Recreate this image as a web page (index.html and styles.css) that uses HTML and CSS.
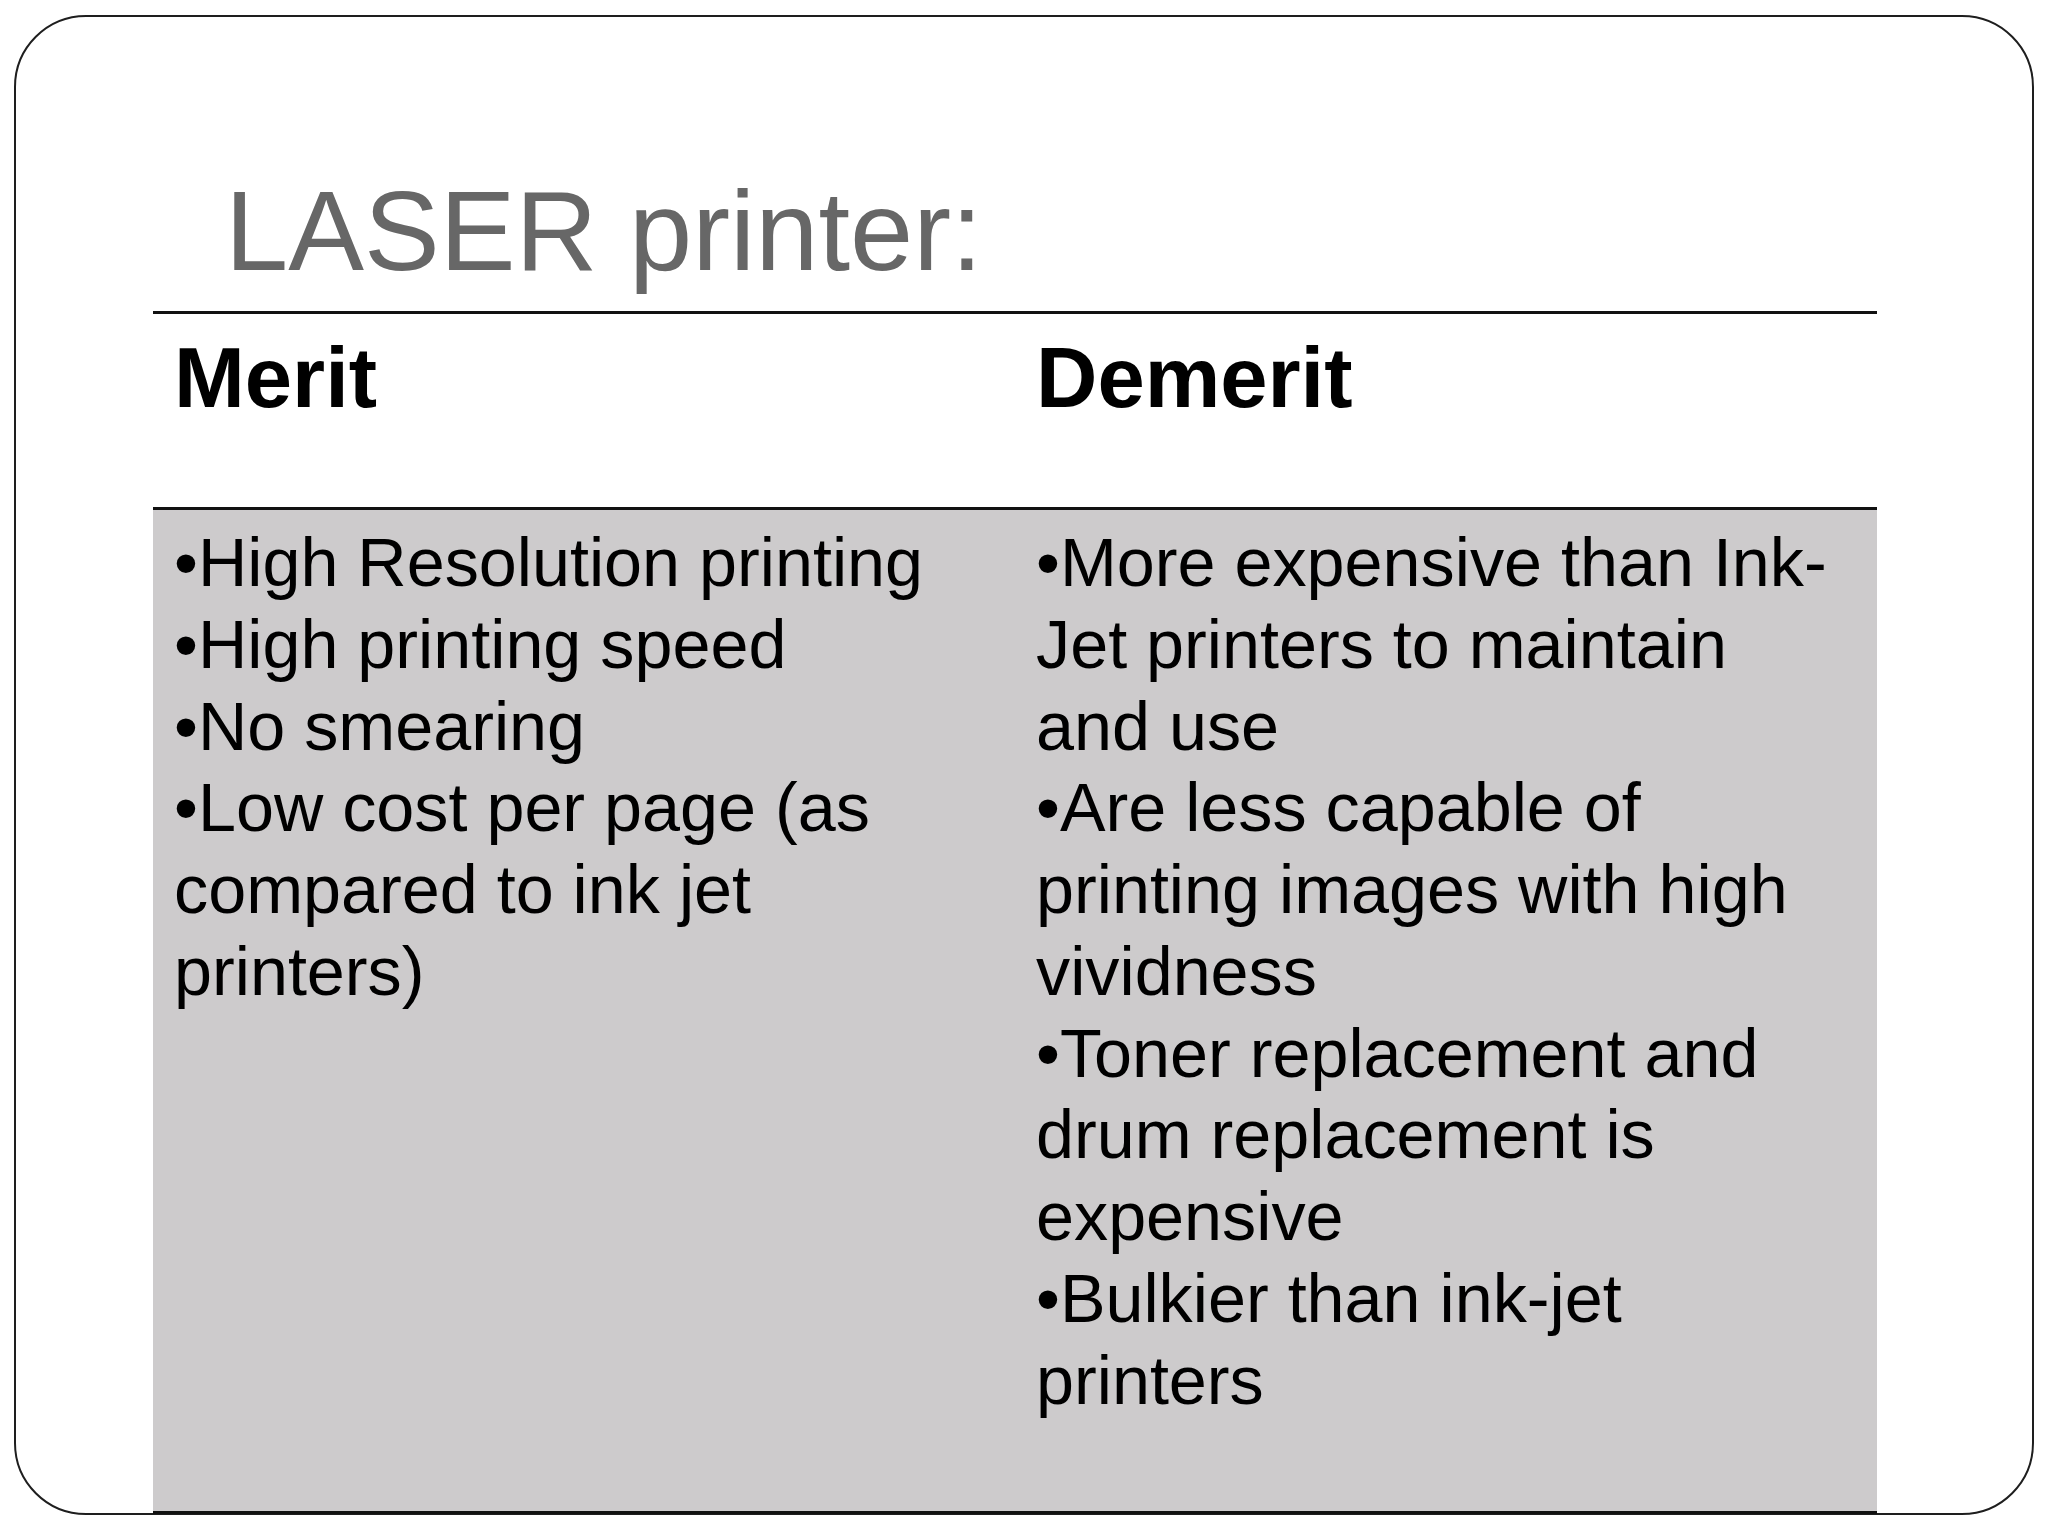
FILE: index.html
```html
<!DOCTYPE html>
<html lang="en">
<head>
<meta charset="utf-8">
<title>LASER printer</title>
<link rel="stylesheet" href="styles.css">
</head>
<body>
<div class="frame">
  <h1 class="title">LASER printer:</h1>
  <div class="table">
    <div class="head-row">
      <div class="cell head">Merit</div>
      <div class="cell head">Demerit</div>
    </div>
    <div class="body-row">
      <div class="cell body">
        <p class="item">•High Resolution printing</p>
        <p class="item">•High printing speed</p>
        <p class="item">•No smearing</p>
        <p class="item">•Low cost per page (as compared to ink jet printers)</p>
      </div>
      <div class="cell body">
        <p class="item">•More expensive than Ink-Jet printers to maintain and use</p>
        <p class="item">•Are less capable of printing images with high vividness</p>
        <p class="item">•Toner replacement and drum replacement is expensive</p>
        <p class="item">•Bulkier than ink-jet printers</p>
      </div>
    </div>
  </div>
</div>
</body>
</html>
```

FILE: styles.css
```css
html, body {
  margin: 0;
  padding: 0;
  background: #ffffff;
}

body {
  width: 2048px;
  height: 1536px;
  overflow: hidden;
  font-family: "Liberation Sans", Arial, sans-serif;
}

.frame {
  box-sizing: border-box;
  margin: 15px 0 0 14px;
  width: 2020px;
  height: 1500px;
  border: 2px solid #1e1e1e;
  border-radius: 72px;
  padding-top: 157px;
  background: #ffffff;
}

.title {
  margin: 0 0 23px 209px;
  font-size: 113.6px;
  line-height: 114px;
  height: 114px;
  font-weight: normal;
  color: #676767;
  white-space: nowrap;
}

.table {
  margin-left: 137px;
  width: 1724px;
}

.head-row {
  display: grid;
  grid-template-columns: 862px 862px;
  border-top: 3px solid #111111;
  border-bottom: 3px solid #111111;
  background: #ffffff;
}

.body-row {
  display: grid;
  grid-template-columns: 862px 862px;
  height: 1001px;
  background: #cdcbcc;
  border-bottom: 3px solid #111111;
}

.cell {
  box-sizing: border-box;
  padding-left: 21px;
  padding-right: 37px;
}

.head {
  padding-top: 21px;
  padding-bottom: 87px;
  font-size: 85px;
  line-height: 85px;
  font-weight: bold;
  color: #000000;
}

.body {
  padding-top: 12px;
  font-size: 68.3px;
  line-height: 81.75px;
  color: #000000;
}

.item {
  margin: 0;
}
```
